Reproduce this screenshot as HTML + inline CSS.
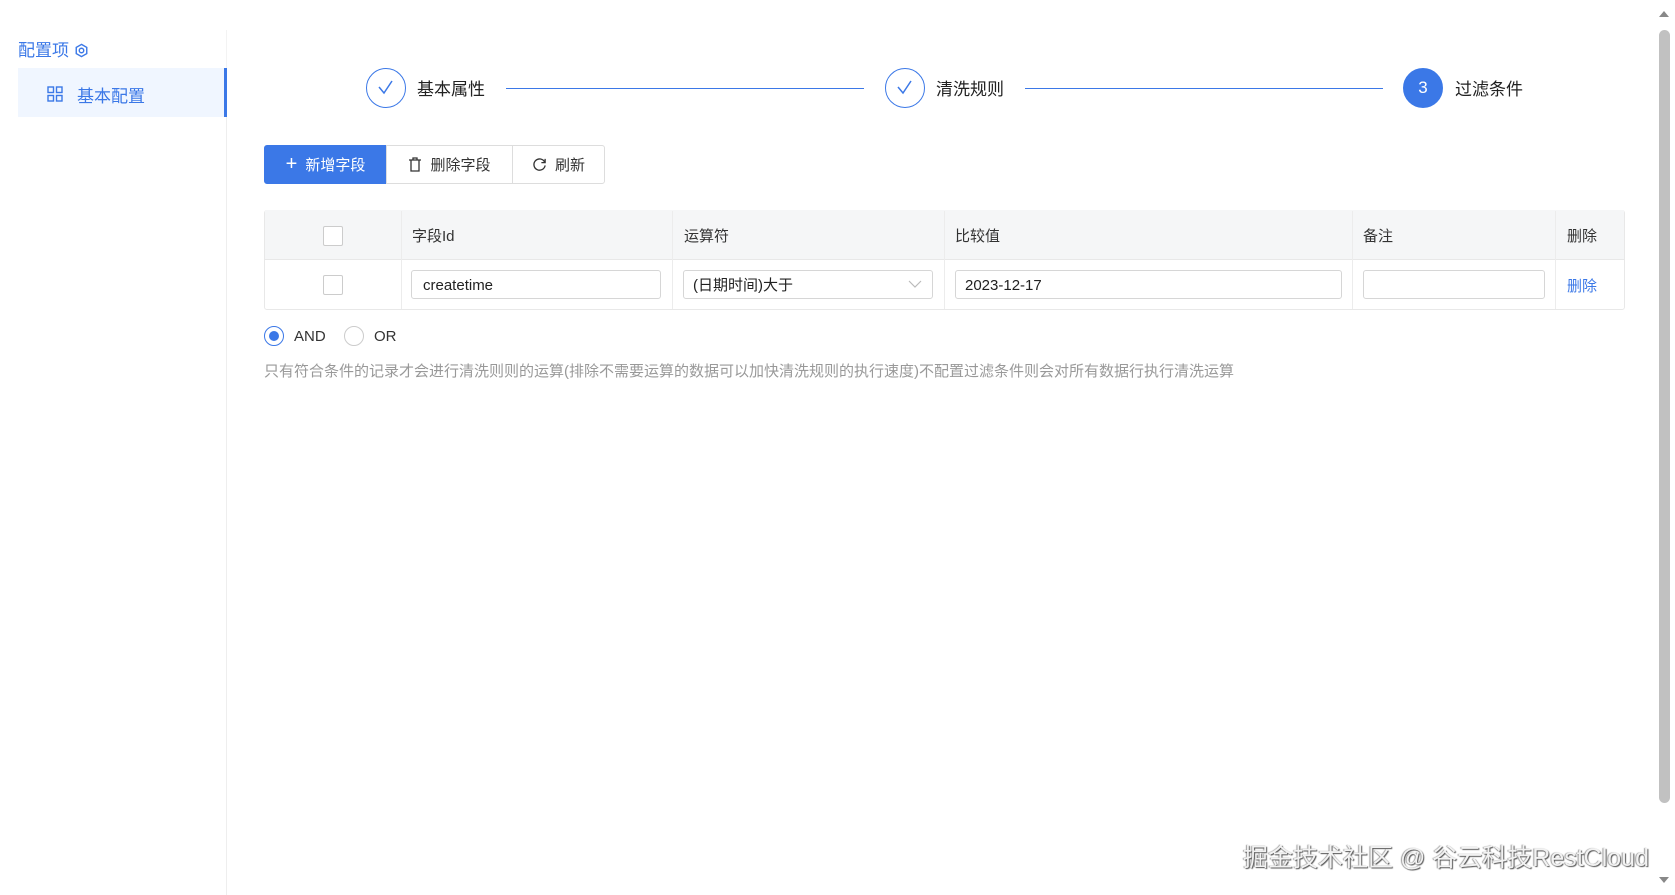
<!DOCTYPE html>
<html><head><meta charset="utf-8"><style>
*{box-sizing:border-box;margin:0;padding:0}
body{width:1675px;height:895px;overflow:hidden;background:#fff;font-family:"Liberation Sans","Noto Sans CJK SC",sans-serif;color:#333;position:relative}
.a{position:absolute}
.title{left:18px;top:36px;font-size:17px;color:#3b78e7}
.side{left:18px;top:68px;width:209px;height:49px;background:#f0f6ff;border-right:3px solid #3b78e7}
.vsep{left:226px;top:117px;width:1px;height:778px;background:#eee}
.circ{width:40px;height:40px;border-radius:50%;border:1.5px solid #3b78e7;top:68px}
.stt{top:75px;font-size:17px;color:#222}
.line{top:88px;height:1px;background:#3b78e7}
.btn{top:145px;height:39px;border:1px solid #ddd;font-size:15px;display:flex;align-items:center;justify-content:center;gap:8px;color:#333}
.tbl{left:264px;top:210px;width:1361px;height:100px;border:1px solid #e8e8e8;border-radius:3px}
.th{top:210px;height:49px;background:#f5f6f7}
.cell{font-size:15px}
.cb{width:20px;height:20px;border:1px solid #ccc;border-radius:2px;background:#fff}
.inp{top:270px;height:29px;border:1px solid #d6d6d6;border-radius:3px;font-size:15px;padding-left:11px;line-height:29px;color:#222;background:#fff}
.vl{width:1px;background:#ececec}
</style></head><body>
<div class="a title">配置项 <svg width="15" height="15" viewBox="0 0 16 16" style="vertical-align:-2px"><path d="M8 1.5 L13.6 4.7 V11.3 L8 14.5 L2.4 11.3 V4.7Z" fill="none" stroke="#3b78e7" stroke-width="1.5"/><circle cx="8" cy="8" r="2.4" fill="none" stroke="#3b78e7" stroke-width="1.5"/></svg></div>
<div class="a side"></div>
<svg class="a" style="left:47px;top:86px" width="16" height="16" viewBox="0 0 16 16"><g fill="none" stroke="#3b78e7" stroke-width="1.4"><rect x="1" y="1" width="5.5" height="5.5"/><rect x="9.5" y="1" width="5.5" height="5.5"/><rect x="1" y="9.5" width="5.5" height="5.5"/><rect x="9.5" y="9.5" width="5.5" height="5.5"/></g></svg>
<div class="a" style="left:77px;top:82px;font-size:17px;color:#3b78e7">基本配置</div>
<div class="a vsep"></div>
<div class="a" style="left:226px;top:30px;width:1px;height:38px;background:#f3f3f3"></div>

<div class="a circ" style="left:366px"><svg width="37" height="37" viewBox="0 0 37 37"><path d="M12 18 L17 24 L25 12" fill="none" stroke="#3b78e7" stroke-width="1.5"/></svg></div>
<div class="a stt" style="left:417px">基本属性</div>
<div class="a line" style="left:506px;width:358px"></div>
<div class="a circ" style="left:885px"><svg width="37" height="37" viewBox="0 0 37 37"><path d="M12 18 L17 24 L25 12" fill="none" stroke="#3b78e7" stroke-width="1.5"/></svg></div>
<div class="a stt" style="left:936px">清洗规则</div>
<div class="a line" style="left:1025px;width:358px"></div>
<div class="a circ" style="left:1403px;background:#3b78e7;color:#fff;font-size:17px;text-align:center;line-height:37px">3</div>
<div class="a stt" style="left:1455px">过滤条件</div>

<div class="a btn" style="left:264px;width:123px;background:#3b78e7;border-color:#3b78e7;color:#fff;border-radius:3px 0 0 3px"><span style="font-size:20px;font-weight:300">+</span>新增字段</div>
<div class="a btn" style="left:386px;width:127px"><svg width="14" height="15" viewBox="0 0 14 15"><path d="M1 3H13M5 3V1H9V3M3 3V14H11V3" fill="none" stroke="#333" stroke-width="1.3"/></svg>删除字段</div>
<div class="a btn" style="left:512px;width:93px;border-radius:0 3px 3px 0"><svg width="15" height="15" viewBox="0 0 16 16"><path d="M13.5 5.5A6 6 0 1 0 14 9" fill="none" stroke="#333" stroke-width="1.4"/><path d="M14 2V6H10" fill="none" stroke="#333" stroke-width="1.4"/></svg>刷新</div>

<div class="a tbl"></div>
<div class="a th" style="left:265px;width:1359px"></div>
<div class="a" style="left:265px;top:259px;width:1359px;height:1px;background:#e8e8e8"></div>
<div class="a vl" style="left:401px;top:211px;height:98px"></div>
<div class="a vl" style="left:672px;top:211px;height:98px"></div>
<div class="a vl" style="left:944px;top:211px;height:98px"></div>
<div class="a vl" style="left:1352px;top:211px;height:98px"></div>
<div class="a vl" style="left:1555px;top:211px;height:98px"></div>
<div class="a cb" style="left:323px;top:226px"></div>
<div class="a cb" style="left:323px;top:275px"></div>
<div class="a cell" style="left:412px;top:225px">字段Id</div>
<div class="a cell" style="left:684px;top:225px">运算符</div>
<div class="a cell" style="left:955px;top:225px">比较值</div>
<div class="a cell" style="left:1363px;top:225px">备注</div>
<div class="a cell" style="left:1567px;top:275px;color:#3b78e7">删除</div>
<div class="a cell" style="left:1567px;top:225px">删除</div>
<div class="a inp" style="left:411px;width:250px">createtime</div>
<div class="a inp" style="left:683px;width:250px;padding-left:9px">(日期时间)大于<svg class="a" style="right:10px;top:9px" width="14" height="9" viewBox="0 0 14 9"><path d="M1 1L7 7L13 1" fill="none" stroke="#bbb" stroke-width="1.2"/></svg></div>
<div class="a inp" style="left:955px;width:387px;padding-left:9px">2023-12-17</div>
<div class="a inp" style="left:1363px;width:182px"></div>

<div class="a" style="left:264px;top:326px;width:20px;height:20px;border-radius:50%;border:1px solid #3b78e7"><div style="width:10px;height:10px;border-radius:50%;background:#3b78e7;margin:4px"></div></div>
<div class="a cell" style="left:294px;top:328px">AND</div>
<div class="a" style="left:344px;top:326px;width:20px;height:20px;border-radius:50%;border:1px solid #ccc"></div>
<div class="a cell" style="left:374px;top:328px">OR</div>
<div class="a" style="left:264px;top:360px;font-size:15px;color:#999;white-space:nowrap">只有符合条件的记录才会进行清洗则则的运算(排除不需要运算的数据可以加快清洗规则的执行速度)不配置过滤条件则会对所有数据行执行清洗运算</div>

<div class="a" style="left:1658px;top:0;width:17px;height:895px;background:#fff"></div>
<div class="a" style="left:1659px;top:30px;width:11px;height:773px;background:#c1c1c1;border-radius:6px"></div>
<div class="a" style="left:1659px;top:11px;width:0;height:0;border-left:5px solid transparent;border-right:5px solid transparent;border-bottom:6px solid #888"></div>
<div class="a" style="left:1659px;top:877px;width:0;height:0;border-left:5px solid transparent;border-right:5px solid transparent;border-top:6px solid #888"></div>

<div class="a" style="left:1243px;top:838px;font-size:25px;color:#f2f2f2;text-shadow:1px 1px 1px #555,-1px 0 1px #999;white-space:nowrap">掘金技术社区 @ 谷云科技RestCloud</div>
</body></html>
